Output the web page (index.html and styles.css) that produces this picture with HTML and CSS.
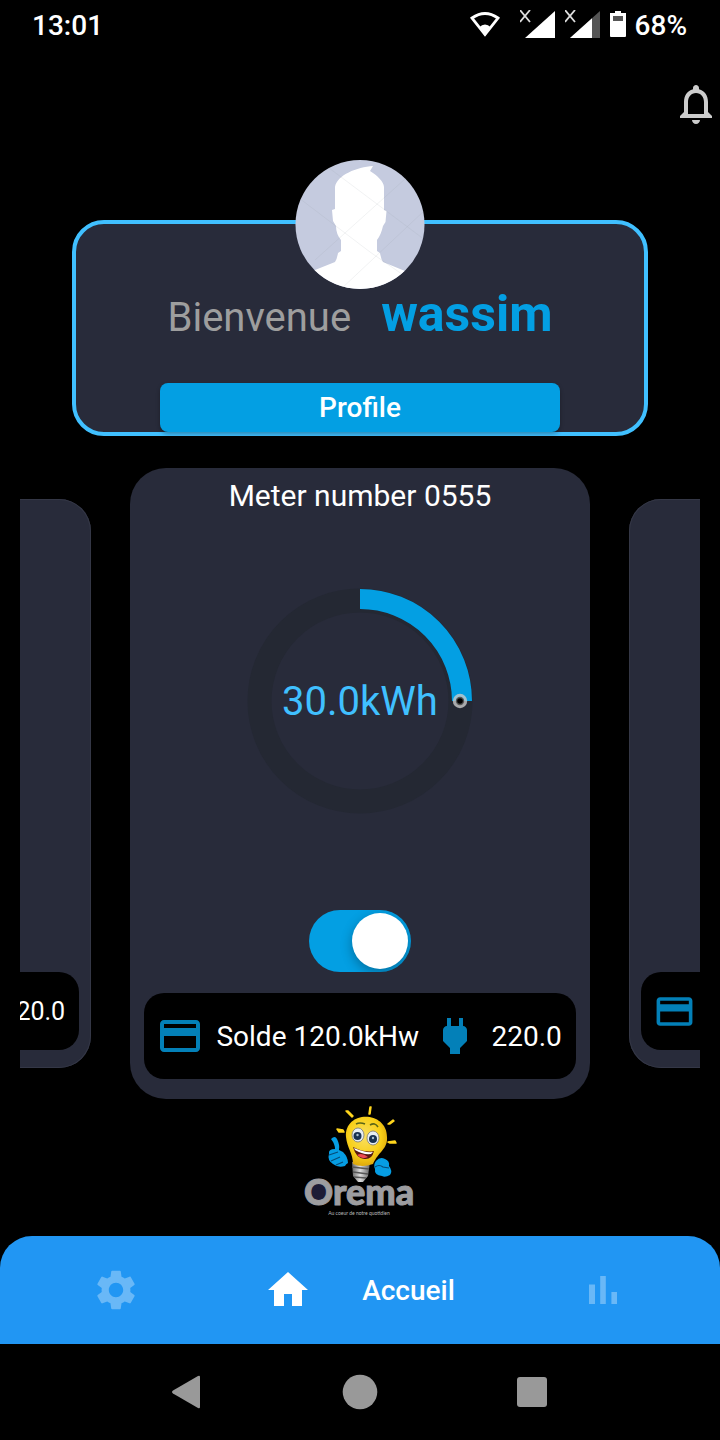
FILE: index.html
```html
<!DOCTYPE html>
<html lang="fr">
<head>
<meta charset="utf-8">
<meta name="viewport" content="width=device-width, initial-scale=1">
<title>Orema</title>
<link rel="stylesheet" href="styles.css">
</head>
<body>
<svg class="defs" aria-hidden="true">
  <symbol id="card" viewBox="0 0 24 24"><path d="M20 4H4c-1.11 0-1.99.89-1.99 2L2 18c0 1.11.89 2 2 2h16c1.11 0 2-.89 2-2V6c0-1.11-.89-2-2-2zm0 14H4v-6h16v6zm0-10H4V6h16v2z"/></symbol>
  <symbol id="plug" viewBox="0 0 24 24"><path d="M16.01 7L16 3h-2v4h-4V3H8v4h-.01C7 6.99 6 7.99 6 8.99v5.49L9.5 18v3h5v-3l3.5-3.51v-5.5c0-1-1-2-1.99-1.99z"/></symbol>
</svg>
<div class="screen">
  <div class="status">
    <span class="time">13:01</span>
    <div class="indicators">
      <svg class="wifi" viewBox="0 0 32 28"><path d="M3 7Q16-2 29 7L16 23.500Z" fill="none" stroke="#fff" stroke-width="2.800"/><path d="M10 16.500Q16 10.500 22 16.500L16 25Z" fill="#fff"/></svg>
      <svg class="signal" viewBox="0 0 36 30"><path d="M5 28L35 1V28Z" fill="#fff"/><path d="M0 0l10 12M10 0L0 12" stroke="#ddd" stroke-width="1.800"/></svg>
      <svg class="signal" viewBox="0 0 36 30"><path d="M5 28L35 1V28Z" fill="#555"/><path d="M5 28L27 8.200V28Z" fill="#fff"/><path d="M0 0l10 12M10 0L0 12" stroke="#ddd" stroke-width="1.800"/></svg>
      <svg class="battery" viewBox="0 0 16 28"><path d="M5 0h6v2h5v23q0 1-1 1H1q-1 0-1-1V2h5z" fill="#fff"/><path d="M3 5h10v5H3z" fill="#555"/></svg>
      <span>68%</span>
    </div>
  </div>

  <header class="topbar">
    <button class="bell" type="button" aria-label="Notifications">
      <svg viewBox="0 0 24 24"><path d="M12 22c1.100 0 2-.9 2-2h-4c0 1.100.9 2 2 2zm6-6v-5c0-3.070-1.630-5.640-4.500-6.320V4c0-.83-.67-1.500-1.500-1.500s-1.500.67-1.500 1.500v.68C7.640 5.360 6 7.920 6 11v5l-2 2v1h16v-1l-2-2zm-2 1H8v-6c0-2.480 1.510-4.500 4-4.500s4 2.020 4 4.500v6z"/></svg>
    </button>
  </header>

  <main>
    <section class="profile">
      <svg class="avatar" viewBox="0 0 130 130" role="img" aria-label="Avatar">
        <clipPath id="round"><circle cx="65" cy="64.500" r="64.500"/></clipPath>
        <g clip-path="url(#round)">
          <path d="M0 0h130v130H0z" fill="#c5cbdf"/>
          <path d="M40 27C42 15 62 7 78 6L75 11C82 15 89 22 89 27V50L91.500 51 90.500 62 88 66Q86 75 82 80V91L85 93Q86 99 88 102L110 111 130 130H0L20 110 40 102Q42 99 43 93L46 91V80Q41 74 41 66L38 61 37 50 40 49Z" fill="#fff"/>
          <path d="M30 5L130 80M0 35L75 92 130 130M20 100L120 10M45 130L130 50" fill="none" stroke="#9298a5" stroke-width=".6" opacity=".22"/>
        </g>
      </svg>
      <h1 class="greeting"><span class="hello">Bienvenue</span><span class="name">wassim</span></h1>
      <button class="profile-button" type="button">Profile</button>
    </section>

    <section class="carousel" aria-label="Compteurs">
      <article class="meter side">
        <div class="info"><svg><use href="#card"/></svg><span>Solde 120.0kHw</span><svg><use href="#plug"/></svg><span>220.0</span></div>
      </article>
      <article class="meter current">
        <h2>Meter number 0555</h2>
        <div class="gauge">
          <svg viewBox="0 0 226 226" aria-hidden="true">
            <circle cx="113" cy="113" r="100.500" fill="none" stroke="#242833" stroke-width="24"/>
            <path d="M113 11A102 102 0 0 1 215 113" fill="none" stroke="#039fe3" stroke-width="20" />
            <circle cx="213" cy="113" r="7.200" fill="#c9c9c9" opacity=".8"/>
            <circle cx="213" cy="113" r="4.200" fill="#555"/><circle cx="213" cy="113" r="2.800" fill="#000"/>
          </svg>
          <span class="reading">30.0kWh</span>
        </div>
        <input class="switch" type="checkbox" role="switch" aria-label="Compteur actif" checked>
        <div class="info"><svg><use href="#card"/></svg><span>Solde 120.0kHw</span><svg><use href="#plug"/></svg><span>220.0</span></div>
      </article>
      <article class="meter side">
        <div class="info"><svg><use href="#card"/></svg></div>
      </article>
    </section>

    <svg class="logo" viewBox="0 0 120 120" role="img" aria-label="Orema">
      <defs>
        <radialGradient id="bulb" cx=".45" cy=".4" r=".62"><stop offset="0" stop-color="#f8df62"/><stop offset=".65" stop-color="#f8cf17"/><stop offset="1" stop-color="#dba60b"/></radialGradient>
        <linearGradient id="metal"><stop stop-color="#666"/><stop offset=".45" stop-color="#ddd"/><stop offset="1" stop-color="#666"/></linearGradient>
      </defs>
      <path d="M71 7l-1 0-1 7h1zM46 11l2 0 5 5-1 1zM37 29l6 1 1 2-5 0zM88 24l5-4 1 1-4 3zM88 42l7-1 1 2-6 0z" fill="#ffd51d" stroke="#ffd51d" stroke-width="1.500" stroke-linejoin="round"/>
      <path d="M52 62h18l-2 14-5 6h-5l-5-6z" fill="url(#metal)"/>
      <path d="M52 67l17 2M53 72l15 2M54 77l12 1" stroke="#565656" stroke-width="1.500"/>
      <path d="M46 37C44 10 87 10 87 37C88 49 78 52 73 64Q62 68 53 64C53 53 47 48 46 37Z" fill="url(#bulb)"/>
      <path d="M56 24q4-2 9 0M70 25q5-3 8 2" fill="none" stroke="#5b6517" stroke-width="1.600"/>
      <ellipse cx="58" cy="35" rx="6" ry="7" fill="#e6eef2" stroke="#777" stroke-width=".8"/><ellipse cx="73" cy="38" rx="6" ry="7" fill="#e6eef2" stroke="#777" stroke-width=".8"/>
      <circle cx="57.500" cy="36" r="4" fill="#183150"/><circle cx="73" cy="39" r="4" fill="#183150"/>
      <circle cx="57.500" cy="35" r="1.200" fill="#aac1d0"/><circle cx="73" cy="38" r="1.200" fill="#aac1d0"/>
      <path d="M53 47q12 6 21 4-2 9-10 8-8-1-11-12z" fill="#581812"/><path d="M54 48q11 5 19 4l-2 2q-8 1-16-4z" fill="#fff"/><path d="M57 55q5-3 11 2-6 3-11-2z" fill="#ee4a54"/>
      <path d="M31 39q4-4 6 0 3 6 2 11l4 2q5 5 5 11-2 1-3 3-7 2-12-2-6-4-4-10-1-5 6-5 0-5-4-10z" fill="#069de3"/>
      <path d="M29 55l9-3M31 61l9-4M36 65l7-3" stroke="#064b77" stroke-width="1.200"/>
      <path d="M76 61q4-5 9-2 5 2 4 7 4 5 1 9-5 3-8 1-8-1-7-7-2-4 1-8z" fill="#069de3"/>
      <path d="M75 67q4-3 8 0l6 1" fill="none" stroke="#064b77" stroke-width="1.200"/>
      <ellipse cx="18" cy="92" rx="8" ry="10" fill="#1c1b36"/>
      <text class="wordmark" x="4" y="105" font-size="36">Orema</text>
      <text class="tagline" x="59" y="115" font-size="5" text-anchor="middle">Au coeur de notre quotidien</text>
    </svg>
  </main>

  <nav class="tabs">
    <a href="#settings" aria-label="Paramètres"><svg viewBox="0 0 24 24"><path d="M19.140 12.940c.04-.3.060-.61.060-.94 0-.32-.02-.64-.07-.94l2.030-1.580c.18-.14.23-.41.12-.61l-1.920-3.320c-.12-.22-.37-.29-.59-.22l-2.390.96c-.5-.38-1.030-.7-1.620-.94l-.36-2.540c-.04-.24-.24-.41-.48-.41h-3.840c-.24 0-.43.17-.47.41l-.36 2.540c-.59.24-1.130.57-1.620.94l-2.390-.96c-.22-.08-.47 0-.59.22L2.740 8.870c-.12.21-.08.47.12.61l2.030 1.580c-.05.3-.09.63-.09.94s.02.64.07.94l-2.030 1.580c-.18.14-.23.41-.12.61l1.920 3.320c.12.22.37.29.59.22l2.390-.96c.5.38 1.030.7 1.620.94l.36 2.540c.05.24.24.41.48.41h3.840c.24 0 .44-.17.47-.41l.36-2.540c.59-.24 1.130-.56 1.620-.94l2.390.96c.22.08.47 0 .59-.22l1.920-3.320c.12-.22.070-.47-.12-.61l-2.010-1.580zM12 15.600c-1.980 0-3.600-1.620-3.600-3.600s1.620-3.600 3.600-3.600 3.600 1.620 3.600 3.600-1.620 3.600-3.600 3.600z"/></svg></a>
    <a class="active" href="#home" aria-current="page"><svg viewBox="0 0 24 24"><path d="M10 20v-6h4v6h5v-8h3L12 3 2 12h3v8z"/></svg><span>Accueil</span></a>
    <a href="#stats" aria-label="Statistiques"><svg viewBox="0 0 24 24"><path d="M5 9.200h3V19H5zM10.600 5h2.800v14h-2.800zm5.600 8H19v6h-2.800z"/></svg></a>
  </nav>

  <div class="system">
    <button type="button" aria-label="Retour"><svg viewBox="0 0 48 48"><path d="M10 22.500L35 8q2-1 2 1v30q0 2-2 1L10 25.500q-2-1.500 0-3z"/></svg></button>
    <button type="button" aria-label="Accueil système"><svg viewBox="0 0 48 48"><circle cx="24" cy="24" r="17.300"/></svg></button>
    <button type="button" aria-label="Applications récentes"><svg viewBox="0 0 48 48"><rect x="8" y="9" width="30" height="30" rx="3"/></svg></button>
  </div>
</div>
</body>
</html>
```

FILE: styles.css
```css
* { box-sizing: border-box; }

body {
  margin: 0;
  background: #000;
  color: #fff;
  font-family: Roboto, "Liberation Sans", sans-serif;
}

button {
  border: 0;
  padding: 0;
  background: none;
  color: inherit;
  font: inherit;
}

svg { display: block; flex: none; }
.defs { position: absolute; width: 0; height: 0; }

.screen {
  display: flex;
  flex-direction: column;
  min-height: 100vh;
  overflow: hidden;
}

.status {
  display: flex;
  justify-content: space-between;
  align-items: center;
  height: 50px;
  padding: 0 33px 0 32px;
  font-size: 28px;
  font-weight: 500;
}
.indicators { display: flex; align-items: center; gap: 9px; }
.wifi { width: 32px; height: 28px; margin-right: 10px; }
.signal { width: 36px; height: 30px; }
.battery { width: 16px; height: 28px; }

.topbar { display: flex; justify-content: flex-end; padding-top: 30px; }
.bell svg { width: 48px; height: 48px; fill: #ccc; }

main { display: flex; flex-direction: column; flex: 1; }

.profile {
  display: flex;
  flex-direction: column;
  align-items: center;
  width: 80%;
  margin: 92px auto 0;
  border: 4px solid #40c0ff;
  border-radius: 32px;
  background: #282b3a;
}
.avatar { width: 130px; height: 130px; margin-top: -64px; }
.greeting {
  display: flex;
  align-items: baseline;
  gap: 30px;
  margin: -6px 0 0;
  line-height: 60px;
}
.hello { color: #9e9e9e; font-size: 40px; font-weight: 400; }
.name { color: #039fe3; font-size: 50px; font-weight: 700; }
.profile-button {
  width: 400px;
  max-width: 90%;
  height: 49px;
  margin-top: 35px;
  border-radius: 8px;
  background: #039fe3;
  box-shadow: 0 2px 4px rgba(0, 0, 0, .3);
  font-size: 28px;
  font-weight: 500;
}

.carousel {
  display: flex;
  justify-content: center;
  gap: 39px;
  margin: 32px 20px 0;
  overflow: hidden;
}
.meter {
  display: flex;
  flex-direction: column;
  flex: none;
  border-radius: 36px;
  background: #282b3a;
}
.current {
  align-items: center;
  width: 67.6%;
  padding: 10px 14px 20px;
}
.side {
  justify-content: flex-end;
  width: 61%;
  margin: 31px 0;
  padding: 12px 12px 18px;
  border-radius: 32px;
  box-shadow: inset 0 0 0 1px #343746;
}
.meter h2 {
  margin: 0;
  font-size: 30px;
  font-weight: 400;
  line-height: 36px;
}
.gauge {
  display: grid;
  place-items: center;
  margin-top: 74px;
}
.gauge > * { grid-area: 1 / 1; }
.gauge svg { width: 226px; height: 226px; }
.reading { color: #40c0ff; font-size: 40px; }

.switch {
  display: flex;
  align-items: center;
  justify-content: flex-end;
  width: 102px;
  height: 62px;
  margin: 96px 0 0;
  padding: 3px;
  appearance: none;
  border-radius: 31px;
  background: #039fe3;
  overflow: hidden;
}
.switch::before {
  content: "";
  width: 56px;
  height: 56px;
  border-radius: 50%;
  background: #fff;
  box-shadow: 0 4px 12px rgba(0, 0, 0, .3);
}
.switch:not(:checked) { justify-content: flex-start; background: #555; }

.info {
  display: flex;
  align-items: center;
  justify-content: space-between;
  width: 100%;
  height: 86px;
  margin-top: 21px;
  padding: 0 14px 0 12px;
  border-radius: 20px;
  background: #000;
  font-size: 28px;
  white-space: nowrap;
}
.info svg { width: 48px; height: 48px; fill: #0380b8; }
.side .info { height: 78px; font-size: 25px; }
.side .info svg { width: 43px; height: 43px; }

.logo { width: 120px; height: 120px; margin: 1px auto 0; }
.wordmark {
  fill: #9d9da0;
  stroke: #9d9da0;
  stroke-width: 1px;
  font-family: Lato, sans-serif;
  font-weight: 900;
}
.tagline { fill: #bbb; font-family: Lato, sans-serif; }

.tabs {
  display: flex;
  align-items: center;
  justify-content: space-between;
  height: 108px;
  padding: 0 93px 0 92px;
  border-radius: 32px 32px 0 0;
  background: #2196f3;
}
.tabs a {
  display: flex;
  align-items: center;
  gap: 50px;
  color: #69b8f7;
  font-size: 28px;
  font-weight: 500;
  text-decoration: none;
}
.tabs .active { color: #fff; }
.tabs svg { width: 48px; height: 48px; fill: currentColor; }

.system {
  display: flex;
  align-items: center;
  justify-content: space-between;
  height: 96px;
  padding: 0 163px;
}
.system svg { width: 48px; height: 48px; fill: #999; }
```
